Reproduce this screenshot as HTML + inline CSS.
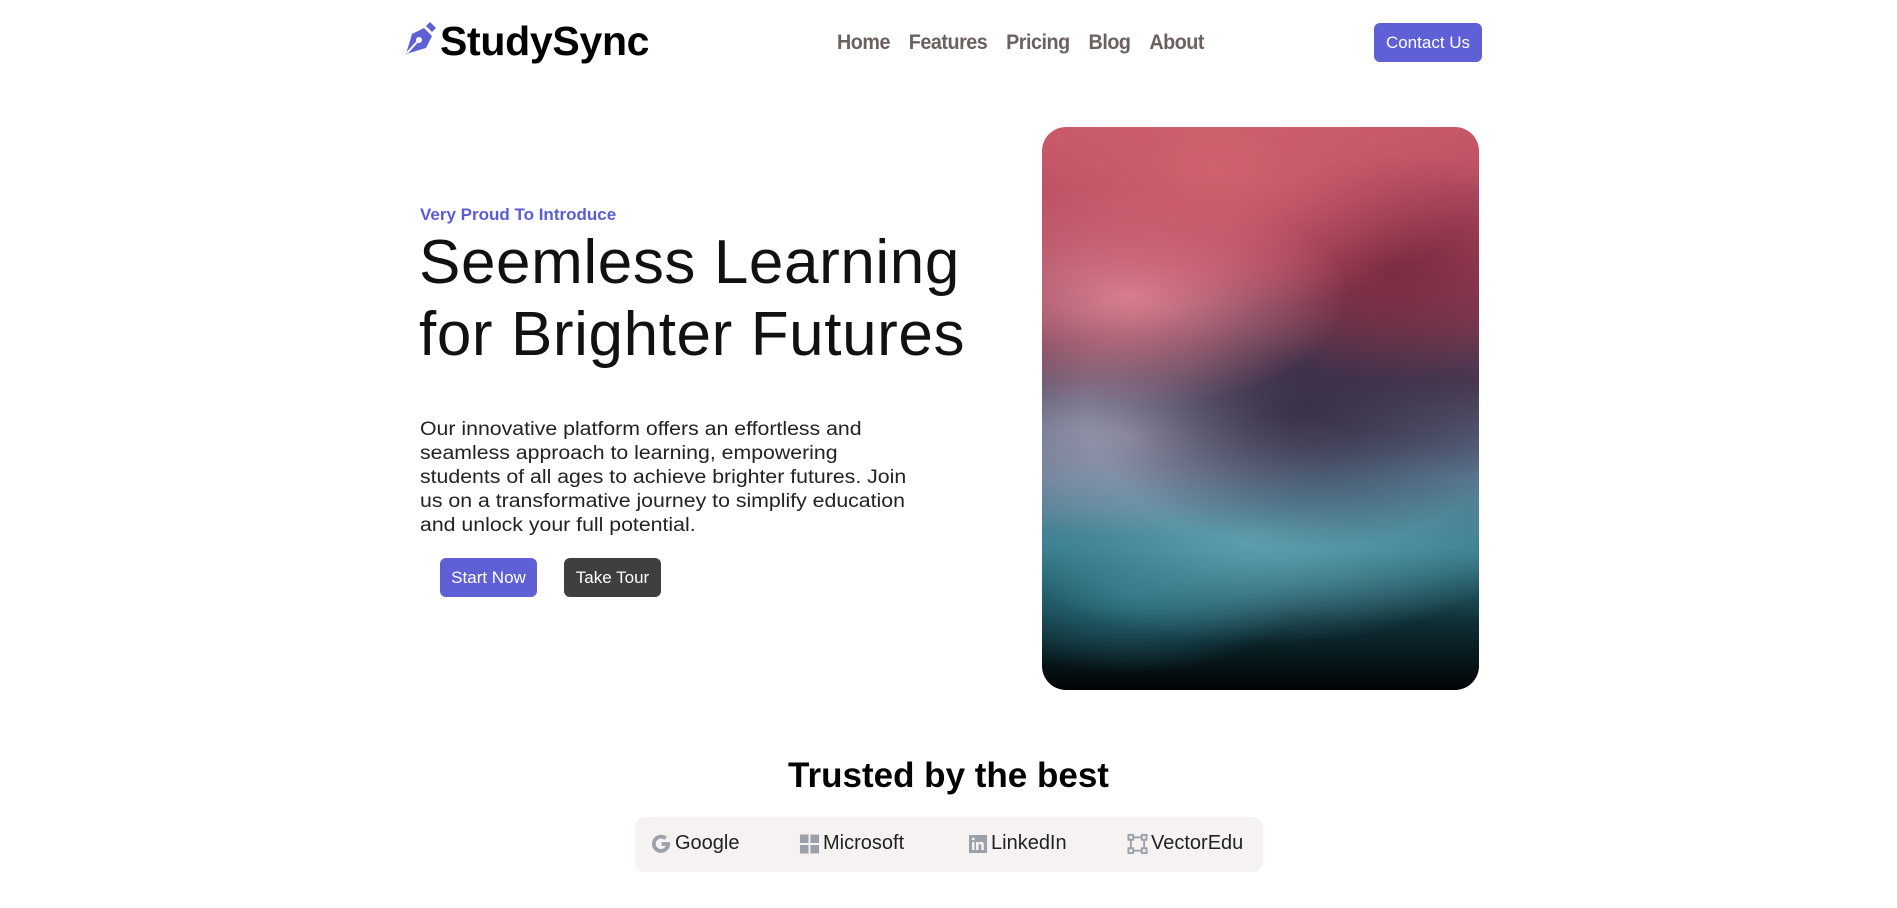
<!DOCTYPE html>
<html><head><meta charset="utf-8"><style>
*{margin:0;padding:0;box-sizing:border-box}
body{width:1897px;height:908px;background:#fff;font-family:"Liberation Sans",sans-serif;position:relative;overflow:hidden;color:#000}
.a{position:absolute;white-space:nowrap}
.nav{transform:scaleX(0.94);transform-origin:0 0}
.nav a{font-weight:bold;font-size:21px;color:#6b625f;margin-right:20px;text-decoration:none;letter-spacing:-0.5px}
.btn{position:absolute;border-radius:6px;color:#fff;font-size:17px;display:flex;align-items:center;justify-content:center}
.logo{display:flex;align-items:center;font-size:20px;color:#222}
.logo svg{margin-right:3px}
</style></head><body>
<svg class="a" style="left:402px;top:20px" width="36" height="36" viewBox="0 0 36 36"><path d="M28 2 L34 8 L30 12 L24 6Z" fill="#5f5fd6"/><path d="M22 8 L30 16 L24 28 L4 34 L10 14Z" fill="#5f5fd6"/><path d="M5 33 L15 22" stroke="#fff" stroke-width="2"/><circle cx="17" cy="20" r="3" fill="#fff"/></svg>
<div class="a" style="left:440px;top:18px;font-size:41px;font-weight:bold;letter-spacing:-0.3px">StudySync</div>
<div class="a nav" style="left:837px;top:31px"><a>Home</a><a>Features</a><a>Pricing</a><a>Blog</a><a>About</a></div>
<div class="btn" style="left:1374px;top:23px;width:108px;height:39px;background:#5f5fd6">Contact Us</div>

<div class="a" style="left:420px;top:205px;font-size:17px;font-weight:bold;color:#5b5bd6">Very Proud To Introduce</div>
<div class="a" style="left:419px;top:227px;font-size:62px;line-height:72px;letter-spacing:0.6px;color:#111">Seemless Learning<br>for Brighter Futures</div>
<div class="a" style="left:420px;top:418px;font-size:19px;line-height:24px;color:#222;transform:scaleX(1.12);transform-origin:0 0">Our innovative platform offers an effortless and<br>seamless approach to learning, empowering<br>students of all ages to achieve brighter futures. Join<br>us on a transformative journey to simplify education<br>and unlock your full potential.</div>
<div class="btn" style="left:440px;top:558px;width:97px;height:39px;background:#5f5fd6">Start Now</div>
<div class="btn" style="left:564px;top:558px;width:97px;height:39px;background:#3f3f3f">Take Tour</div>

<div class="a" style="left:1042px;top:127px;width:437px;height:563px;border-radius:24px;background:
radial-gradient(ellipse 60% 25% at 40% 8%,#d0606e,transparent),
radial-gradient(ellipse 50% 20% at 20% 30%,#d88090,transparent),
radial-gradient(ellipse 40% 20% at 80% 25%,#7a2a40,transparent),
radial-gradient(ellipse 50% 25% at 60% 50%,#3a3048,transparent),
radial-gradient(ellipse 50% 18% at 20% 55%,#9a9ab0,transparent),
radial-gradient(ellipse 60% 20% at 50% 72%,#5fa0b0,transparent),
radial-gradient(ellipse 40% 15% at 20% 82%,#2a7080,transparent),
linear-gradient(180deg,#c85868 0%,#a04058 25%,#4a3850 45%,#5a7890 62%,#3a8090 75%,#0e2e34 88%,#020406 100%)"></div>

<div class="a" style="left:0;width:1897px;text-align:center;top:756px;font-size:35px;font-weight:bold">Trusted by the best</div>
<div class="a" style="left:635px;top:817px;width:628px;height:55px;background:#f5f2f1;border-radius:10px"></div>
<div class="a logo" style="left:651px;top:832px"><svg width="21" height="22" viewBox="0 0 22 22"><path d="M19 9H11v4h4.5A5.5 5.5 0 1 1 14 6.5l2.8-2.8A9.5 9.5 0 1 0 20 11c0-.7 0-1.3-.1-2Z" fill="#9ca0ab"/></svg>Google</div>
<div class="a logo" style="left:799px;top:832px"><svg width="21" height="22" viewBox="0 0 22 22"><path d="M1 1h9v9H1zM12 1h9v9h-9zM1 12h9v9H1zM12 12h9v9h-9z" fill="#9ca0ab"/></svg>Microsoft</div>
<div class="a logo" style="left:968px;top:832px"><svg width="20" height="22" viewBox="0 0 20 22"><rect x="1" y="2" width="18" height="18" fill="#9ca0ab"/><path d="M4 9h2.5v8H4zM8 9h2.4v1.2c.6-1 1.6-1.4 2.6-1.4 2 0 2.8 1.2 2.8 3.3V17h-2.5v-4.4c0-1-.4-1.6-1.3-1.6s-1.5.6-1.5 1.7V17H8z" fill="#f5f2f1"/><circle cx="5.2" cy="6" r="1.4" fill="#f5f2f1"/></svg>LinkedIn</div>
<div class="a logo" style="left:1127px;top:832px"><svg width="21" height="22" viewBox="0 0 22 22"><rect x="4" y="4" width="14" height="14" fill="none" stroke="#9ca0ab" stroke-width="2"/><rect x="1.5" y="1.5" width="5" height="5" fill="#f5f2f1" stroke="#9ca0ab" stroke-width="2"/><rect x="15.5" y="1.5" width="5" height="5" fill="#f5f2f1" stroke="#9ca0ab" stroke-width="2"/><rect x="1.5" y="15.5" width="5" height="5" fill="#f5f2f1" stroke="#9ca0ab" stroke-width="2"/><rect x="15.5" y="15.5" width="5" height="5" fill="#f5f2f1" stroke="#9ca0ab" stroke-width="2"/></svg>VectorEdu</div>
</body></html>
